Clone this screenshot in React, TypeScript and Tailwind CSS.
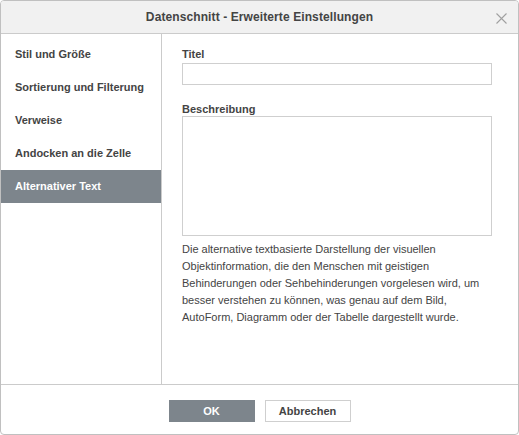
import React from 'react'

const tabs = [
	'Stil und Größe',
	'Sortierung und Filterung',
	'Verweise',
	'Andocken an die Zelle',
	'Alternativer Text'
]

export default function App() {
	const active = 4

	return (
		<div className="h-[435px] w-[519px] bg-white font-['Liberation_Sans',Arial,sans-serif] text-[#444]">
			<div className="flex h-full flex-col overflow-hidden rounded-[4px] border border-[#c0c0c0]">
				<header className="relative flex h-[33px] shrink-0 items-center justify-center border-b border-[#cbcbcb] bg-[#f1f1f1]">
					<span className="text-[12px] font-bold tracking-[0.1px] text-[#444]">
						Datenschnitt - Erweiterte Einstellungen
					</span>
					<button className="absolute right-[11px] top-[12px] h-[11px] w-[11px]">
						<svg viewBox="0 0 11 11" width="11" height="11">
							<path d="M0.5 0.5 L10.5 10.5 M10.5 0.5 L0.5 10.5" stroke="#a0a0a0" strokeWidth="1.1" fill="none" />
						</svg>
					</button>
				</header>

				<div className="flex h-[351px] shrink-0 border-b border-[#cbcbcb]">
					<nav className="w-[161px] shrink-0 border-r border-[#cbcbcb] pt-[4px]">
						{tabs.map((t, i) => (
							<div
								key={t}
								className={`flex h-[33px] items-center px-[14px] text-[11px] font-bold ${
									i === active ? 'bg-[#7d858c] text-white' : 'text-[#444]'
								}`}
							>
								{t}
							</div>
						))}
					</nav>

					<section className="flex-1 pl-[20px] pr-[26px] pt-[14px]">
						<label className="block text-[11px] font-bold leading-[13px]">Titel</label>
						<input className="mt-[2px] block h-[22px] w-[310px] border border-[#cfcfcf] bg-white px-1 text-[11px] outline-none" />

						<label className="mt-[18px] block text-[11px] font-bold leading-[13px]">Beschreibung</label>
						<textarea className="block h-[120px] w-[310px] resize-none border border-[#cfcfcf] bg-white px-1 text-[11px] outline-none" />

						<p className="mt-[5px] w-[310px] text-[11px] leading-[17px] text-[#444]">
							Die alternative textbasierte Darstellung der visuellen Objektinformation, die den Menschen mit geistigen
							Behinderungen oder Sehbehinderungen vorgelesen wird, um besser verstehen zu können, was genau auf dem Bild,
							AutoForm, Diagramm oder der Tabelle dargestellt wurde.
						</p>
					</section>
				</div>

				<footer className="flex flex-1 items-start justify-center gap-[10px] pt-[15px]">
					<button className="h-[22px] w-[86px] bg-[#7d858c] text-[11px] font-bold text-white">OK</button>
					<button className="h-[22px] w-[86px] border border-[#cfcfcf] bg-white text-[11px] font-bold text-[#444]">
						Abbrechen
					</button>
				</footer>
			</div>
		</div>
	)
}
